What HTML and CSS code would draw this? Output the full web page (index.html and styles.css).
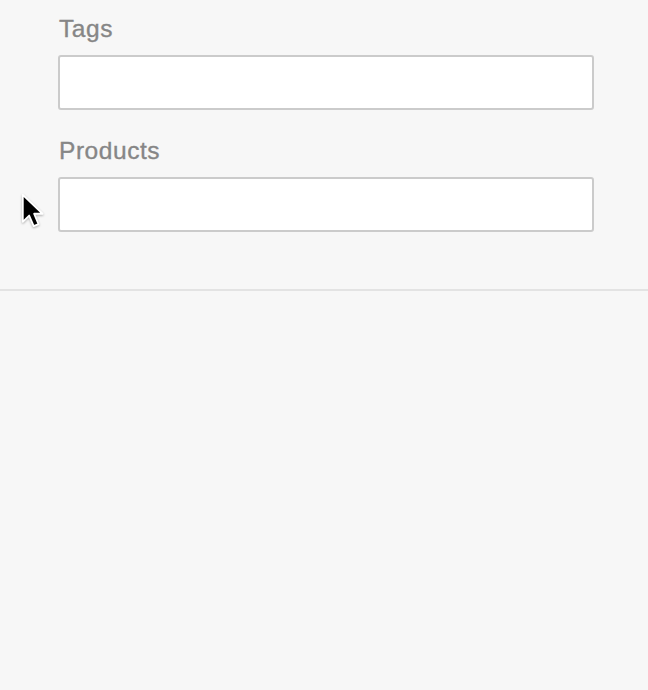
FILE: index.html
```html
<!DOCTYPE html>
<html>
<head>
<meta charset="utf-8">
<link rel="stylesheet" href="styles.css">
</head>
<body>
<div class="panel">
  <div class="field">
    <label class="label">Tags</label>
    <div class="input"></div>
  </div>
  <div class="field">
    <label class="label">Products</label>
    <div class="input"></div>
  </div>
</div>
<div class="divider"></div>
<svg class="cursor" width="24" height="36" viewBox="0 0 20 30">
  <path d="M1.5 1.5 L1.5 24 L6.8 18.8 L10.6 27.6 L14.6 25.9 L10.9 17.3 L18 17.3 Z" fill="#000" stroke="#fff" stroke-width="1.5" stroke-linejoin="round"/>
</svg>
</body>
</html>
```

FILE: styles.css
```css
html, body {
  margin: 0;
  padding: 0;
  background: #f7f7f7;
  width: 648px;
  height: 690px;
  overflow: hidden;
  font-family: "Liberation Sans", Arial, sans-serif;
}
.panel {
  padding: 17px 54px 57px 58px;
  display: flex;
  flex-direction: column;
  gap: 29px;
}
.field {
  display: flex;
  flex-direction: column;
  gap: 14px;
}
.label {
  display: block;
  font-size: 24.5px;
  line-height: 24px;
  color: #868686;
  letter-spacing: 0.55px;
  -webkit-text-stroke: 0.35px #868686;
  margin-left: 1px;
}
.input {
  height: 51px;
  background: #fff;
  border: 2px solid #cbcbcb;
  border-radius: 3px;
}
.divider {
  height: 2px;
  background: #e3e3e3;
}
.cursor {
  position: absolute;
  left: 21px;
  top: 193px;
  filter: drop-shadow(0 1px 1px rgba(0,0,0,0.3));
}
```
